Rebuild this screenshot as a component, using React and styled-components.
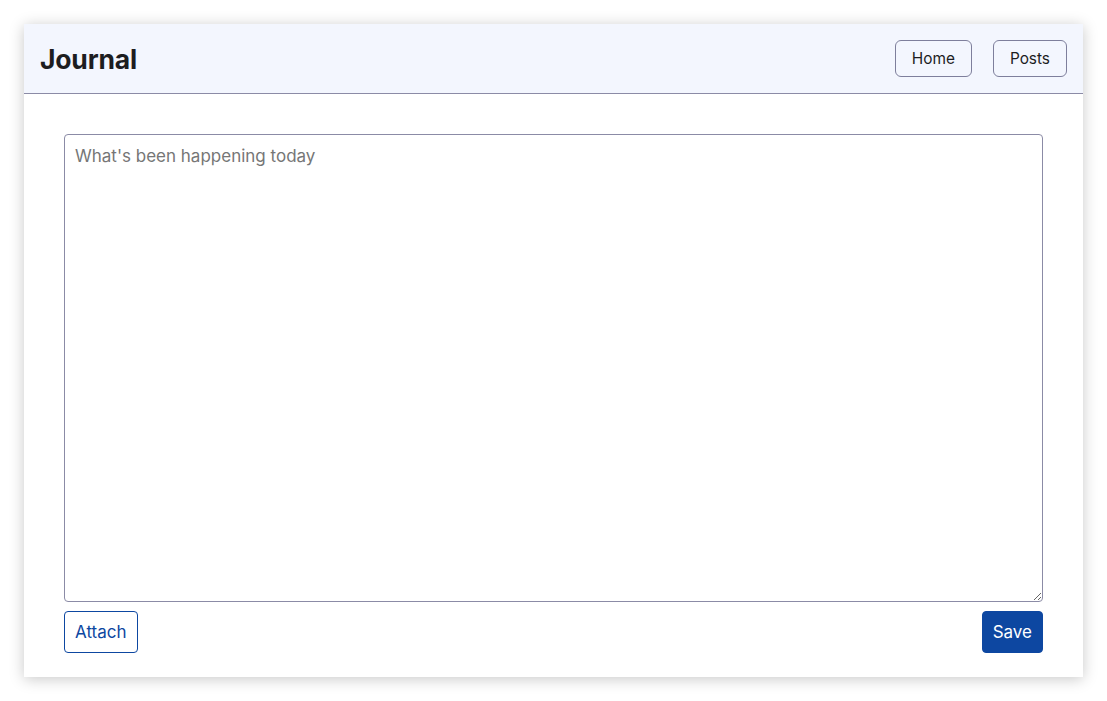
import React from 'react';
import styled, { createGlobalStyle } from 'styled-components';

const GlobalStyle = createGlobalStyle`
  html, body {
    margin: 0;
    background: #ffffff;
    font-family: Inter, "Noto Sans", "Liberation Sans", sans-serif;
  }
  body {
    padding: 24px;
  }
`;

const Card = styled.div`
  width: 1059px;
  height: 653px;
  background: #fff;
  box-shadow: 0 2px 14px rgba(0, 0, 0, 0.22);
  display: flex;
  flex-direction: column;
`;

const Header = styled.header`
  height: 69px;
  background: #f3f6fe;
  border-bottom: 1px solid #8b8ba6;
  display: flex;
  align-items: center;
  justify-content: space-between;
  padding: 0 16px;
`;

const Title = styled.h1`
  margin: 0;
  font-size: 26.5px;
  font-weight: 700;
  color: #1d1d1f;
  letter-spacing: -0.2px;
`;

const Nav = styled.nav`
  display: flex;
  gap: 21px;
`;

const NavButton = styled.button`
  height: 37px;
  padding: 0 16px;
  background: transparent;
  border: 1px solid #7e7f9c;
  border-radius: 6px;
  font-family: inherit;
  font-size: 15.4px;
  color: #1d1d1f;
`;

const Main = styled.main`
  flex: 1;
  display: flex;
  flex-direction: column;
  padding: 40px 40px 24px;
`;

const Entry = styled.textarea`
  height: 468px;
  box-sizing: border-box;
  border: 1px solid #8b8ba6;
  border-radius: 4px;
  padding: 11px 10px;
  font-family: inherit;
  font-size: 17px;
  color: #1d1d1f;
  resize: vertical;
  outline: none;
  &::placeholder {
    color: #767676;
  }
`;

const Actions = styled.div`
  margin-top: 9px;
  display: flex;
  justify-content: space-between;
`;

const ActionButton = styled.button`
  height: 42px;
  padding: 0 10px;
  border-radius: 4px;
  font-family: inherit;
  font-size: 17px;
  border: 1px solid #0d47a1;
  background: ${p => (p.$primary ? '#0d47a1' : '#fff')};
  color: ${p => (p.$primary ? '#fff' : '#0d47a1')};
`;

export default function App() {
  return (
    <>
      <GlobalStyle />
      <Card>
        <Header>
          <Title>Journal</Title>
          <Nav>
            <NavButton>Home</NavButton>
            <NavButton>Posts</NavButton>
          </Nav>
        </Header>
        <Main>
          <Entry placeholder="What's been happening today" />
          <Actions>
            <ActionButton>Attach</ActionButton>
            <ActionButton $primary>Save</ActionButton>
          </Actions>
        </Main>
      </Card>
    </>
  );
}
